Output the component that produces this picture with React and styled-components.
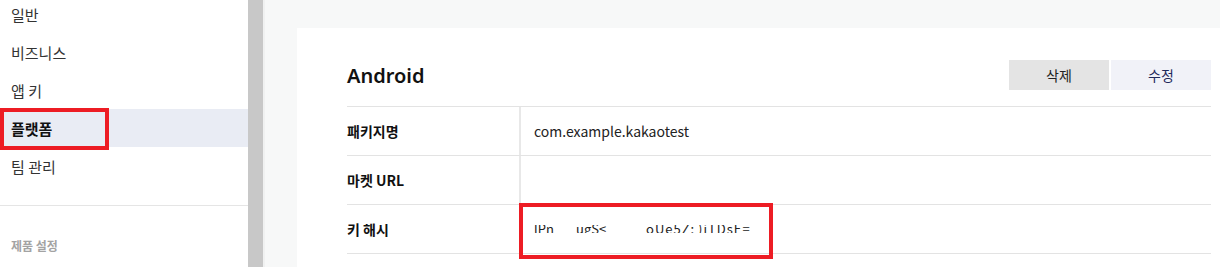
import React from 'react';
import styled, { createGlobalStyle } from 'styled-components';

const GlobalStyle = createGlobalStyle`
  html, body {
    margin: 0;
    padding: 0;
    background: #fff;
    overflow: hidden;
  }
  body {
    font-family: "Noto Sans CJK KR", "Noto Sans", sans-serif;
    color: #222;
  }
`;

const Page = styled.div`
  display: flex;
  width: 1220px;
  height: 267px;
  overflow: hidden;
`;

const Sidebar = styled.aside`
  width: 248px;
  flex-shrink: 0;
  background: #fff;
`;

const NavList = styled.ul`
  list-style: none;
  margin: -5px 0 0;
  padding: 0;
`;

const NavItem = styled.li`
  position: relative;
  height: 38px;
  display: flex;
  align-items: center;
  padding-left: 11px;
  font-size: 15px;
  color: ${(p) => (p.$active ? '#111' : '#333')};
  font-weight: ${(p) => (p.$active ? 700 : 400)};
  background: ${(p) => (p.$active ? '#e9ecf4' : 'transparent')};
`;

const Divider = styled.hr`
  border: 0;
  border-top: 1px solid #e5e5e5;
  margin: 20px 0 0;
`;

const SectionLabel = styled.div`
  padding: 31px 0 0 11px;
  font-size: 12px;
  font-weight: 700;
  color: #a3a3a3;
`;

const Scrollbar = styled.div`
  width: 15px;
  flex-shrink: 0;
  background: #c8c8c8;
  border-right: 2px solid #f0f1f1;
`;

const Main = styled.main`
  flex: 1;
  background: #f7f8f8;
  padding: 28px 0 0 32px;
`;

const Card = styled.section`
  background: #fff;
  height: 100%;
  padding: 32px 9px 0 50px;
`;

const Header = styled.div`
  display: flex;
  align-items: center;
  justify-content: space-between;
  height: 30px;
  padding-bottom: 16px;
  border-bottom: 1px solid #e3e3e3;
`;

const Title = styled.h2`
  margin: 0;
  font-family: "Noto Sans", "Noto Sans CJK KR", sans-serif;
  font-size: 20px;
  font-weight: 600;
  color: #111;
`;

const Actions = styled.div`
  display: flex;
  gap: 2px;
`;

const Button = styled.button`
  width: 100px;
  height: 30px;
  border: 0;
  padding: 0;
  font-family: inherit;
  font-size: 14px;
  color: ${(p) => (p.$primary ? '#1f2a5c' : '#222')};
  background: ${(p) => (p.$primary ? '#f1f2f8' : '#e4e4e4')};
`;

const Row = styled.div`
  display: flex;
  height: 48px;
  border-bottom: 1px solid #e3e3e3;
`;

const Label = styled.div`
  width: 172px;
  flex-shrink: 0;
  border-right: 2px solid #e8e8e8;
  display: flex;
  align-items: center;
  font-size: 14px;
  font-weight: 700;
  color: #111;
`;

const Value = styled.div`
  position: relative;
  flex: 1;
  display: flex;
  align-items: center;
  padding-left: 13px;
  font-size: 14px;
  color: #222;
`;

/* 키 해시는 가려진 상태로 윗부분만 보인다 */
const Masked = styled.div`
  display: flex;
  height: 8px;
  overflow: hidden;
  align-items: flex-start;
`;

const MaskPart = styled.span`
  display: block;
  flex-shrink: 0;
  overflow: hidden;
  width: ${(p) => (p.$w ? `${p.$w}px` : 'auto')};
  letter-spacing: ${(p) => p.$ls || 0}px;
  line-height: 14px;
  margin-top: -3px;
  font-size: 13px;
  white-space: pre;
`;

const Highlight = styled.div`
  position: absolute;
  border: 4px solid #ed1c24;
  pointer-events: none;
  top: ${(p) => p.$top}px;
  left: ${(p) => p.$left}px;
  width: ${(p) => p.$w}px;
  height: ${(p) => p.$h}px;
  box-sizing: border-box;
`;

const navItems = ['일반', '비즈니스', '앱 키', '플랫폼', '팀 관리'];

const hashParts = [
  { text: 'lPn', w: 42 },
  { text: 'ugS<', w: 70 },
  { text: 'oUe5Z:', w: 52, ls: 1 },
  { text: ')iTDsE=', ls: 1 },
];

export default function App() {
  return (
    <>
      <GlobalStyle />
      <Page>
        <Sidebar>
          <NavList>
            {navItems.map((item) => (
              <NavItem key={item} $active={item === '플랫폼'}>
                {item}
                {item === '플랫폼' && (
                  <Highlight $top={-1} $left={0} $w={109} $h={42} />
                )}
              </NavItem>
            ))}
          </NavList>
          <Divider />
          <SectionLabel>제품 설정</SectionLabel>
        </Sidebar>
        <Scrollbar />
        <Main>
          <Card>
            <Header>
              <Title>Android</Title>
              <Actions>
                <Button>삭제</Button>
                <Button $primary>수정</Button>
              </Actions>
            </Header>
            <Row>
              <Label>패키지명</Label>
              <Value>com.example.kakaotest</Value>
            </Row>
            <Row>
              <Label>마켓 URL</Label>
              <Value />
            </Row>
            <Row>
              <Label>키 해시</Label>
              <Value>
                <Masked>
                  {hashParts.map((p) => (
                    <MaskPart key={p.text} $w={p.w} $ls={p.ls}>
                      {p.text}
                    </MaskPart>
                  ))}
                </Masked>
                <Highlight $top={-2} $left={-2} $w={254} $h={56} />
              </Value>
            </Row>
          </Card>
        </Main>
      </Page>
    </>
  );
}
